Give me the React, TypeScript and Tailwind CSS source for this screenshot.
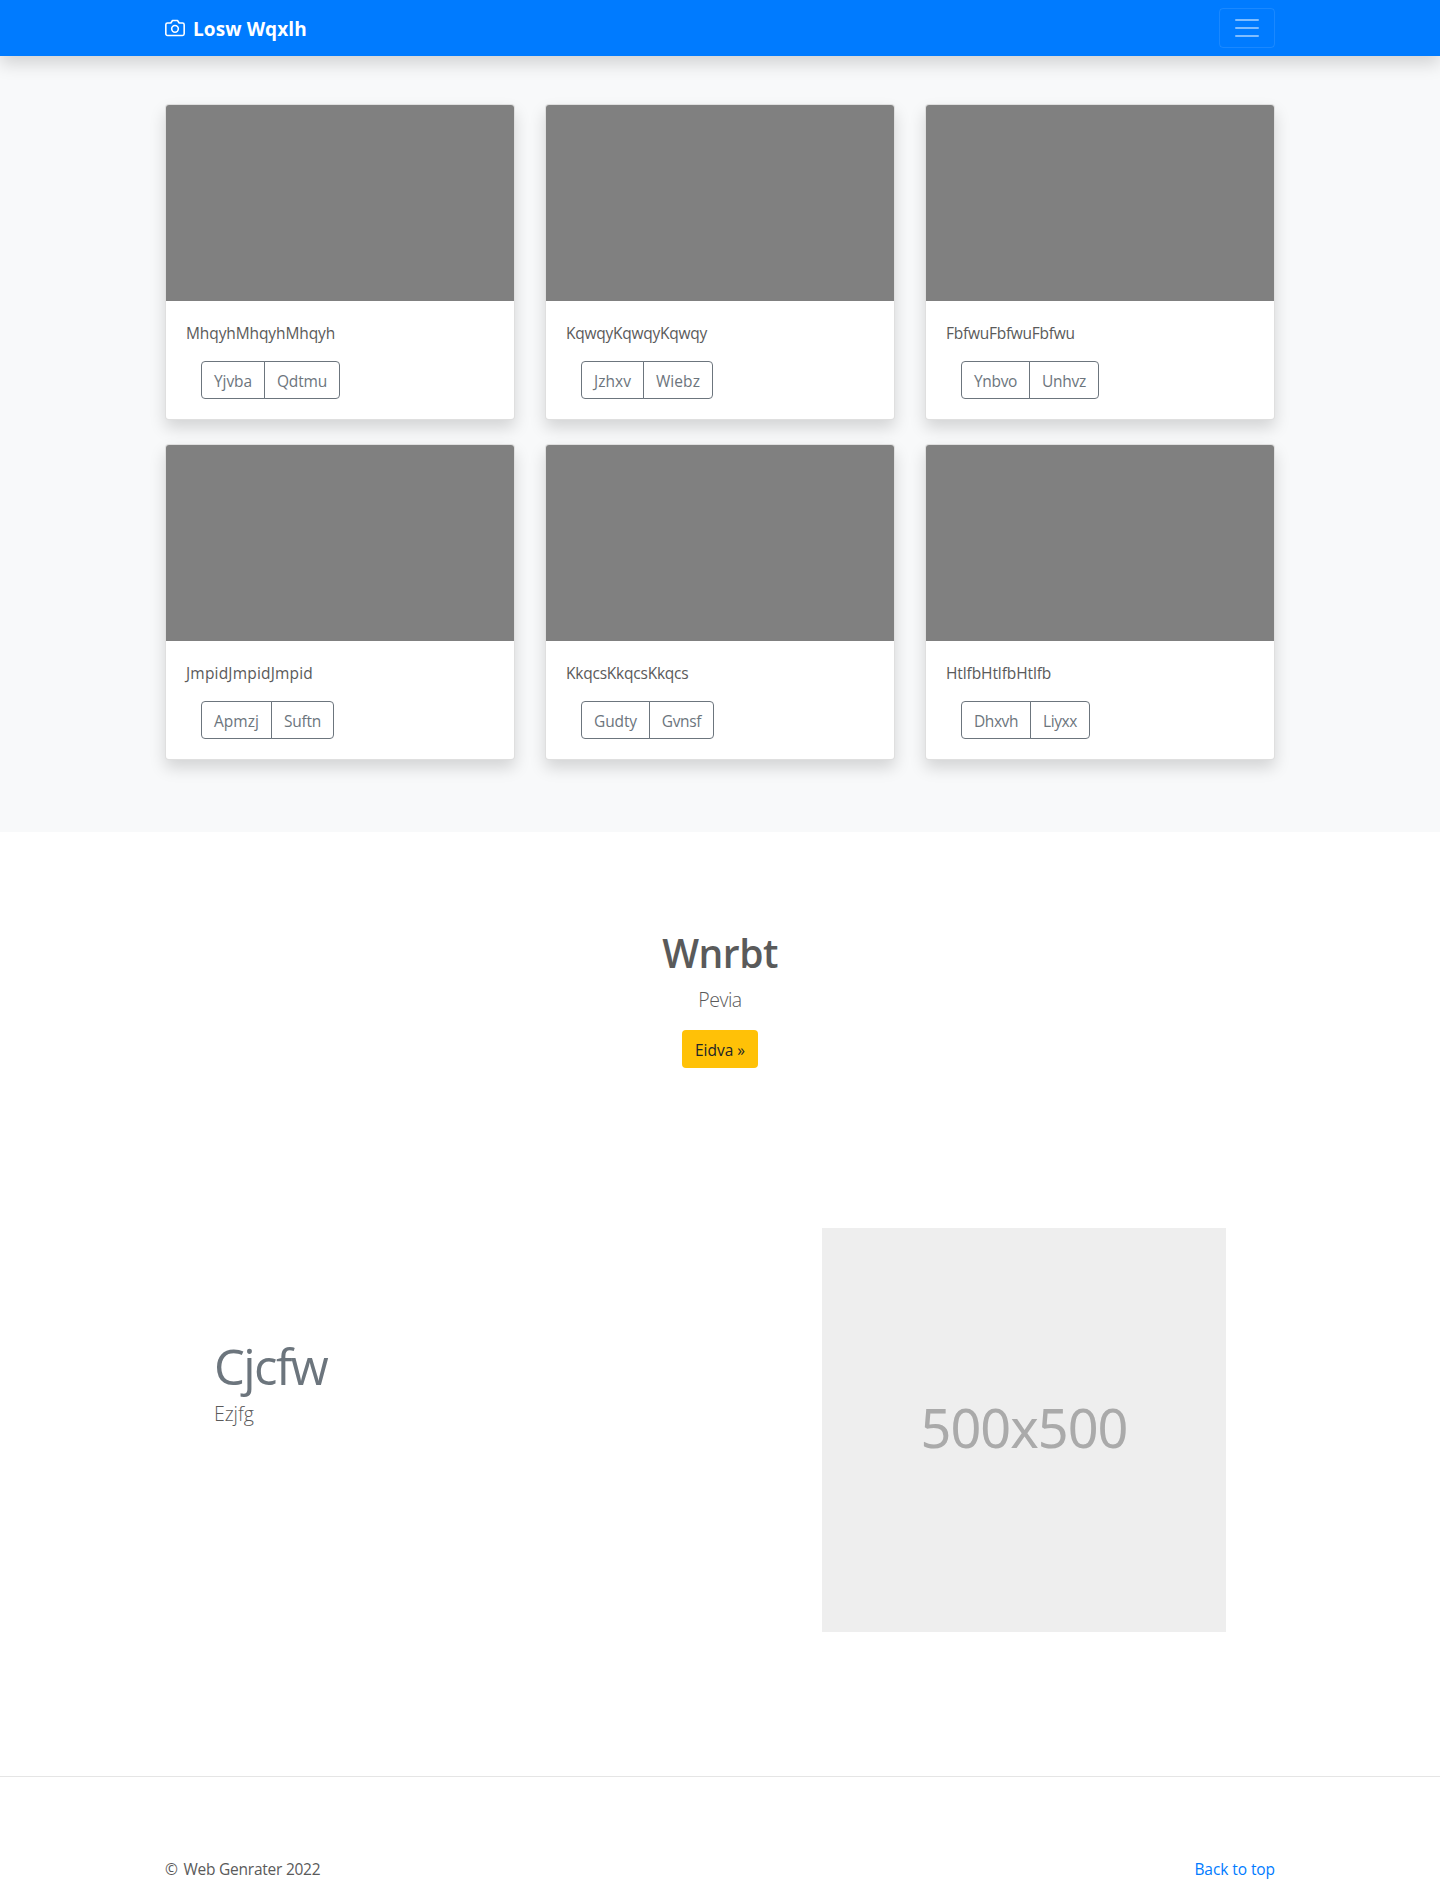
type CardData = {
  title: string;
  titleClass: string;
  left: string;
  leftClass: string;
  right: string;
  rightClass: string;
};

const cards: CardData[] = [
  {
    title: "MhqyhMhqyhMhqyh",
    titleClass: "tracking-[-0.1px]",
    left: "Yjvba",
    leftClass: "w-16 tracking-[-0.08px]",
    right: "Qdtmu",
    rightClass: "w-19 tracking-[-0.18px]",
  },
  {
    title: "KqwqyKqwqyKqwqy",
    titleClass: "tracking-[-0.24px]",
    left: "Jzhxv",
    leftClass: "w-[63px] tracking-[0.04px]",
    right: "Wiebz",
    rightClass: "w-[70px] tracking-[0.06px]",
  },
  {
    title: "FbfwuFbfwuFbfwu",
    titleClass: "tracking-[-0.26px]",
    left: "Ynbvo",
    leftClass: "w-[69px] tracking-[-0.3px]",
    right: "Unhvz",
    rightClass: "w-[70px] tracking-[-0.25px]",
  },
  {
    title: "JmpidJmpidJmpid",
    titleClass: "tracking-[0.19px]",
    left: "Apmzj",
    leftClass: "w-[71px] tracking-[0.04px]",
    right: "Suftn",
    rightClass: "w-[63px] tracking-[-0.26px]",
  },
  {
    title: "KkqcsKkqcsKkqcs",
    titleClass: "tracking-[-0.22px]",
    left: "Gudty",
    leftClass: "w-[69px] tracking-[-0.12px]",
    right: "Gvnsf",
    rightClass: "w-[65px] tracking-[-0.35px]",
  },
  {
    title: "HtlfbHtlfbHtlfb",
    titleClass: "tracking-[-0.1px]",
    left: "Dhxvh",
    leftClass: "w-[70px] tracking-[-0.4px]",
    right: "Liyxx",
    rightClass: "w-[60px] tracking-[-0.4px]",
  },
];

function Navbar() {
  return (
    <header className="relative z-10 h-14 bg-[#007bff] shadow-[0_8px_16px_rgba(0,0,0,0.15)]">
      <div className="mx-auto flex h-full w-[1110px] items-center justify-between">
        <a href="#" className="flex items-center text-white">
          <svg
            className="mr-2 size-5"
            viewBox="0 0 24 24"
            fill="none"
            stroke="currentColor"
            strokeWidth="1.9"
            strokeLinecap="round"
            strokeLinejoin="round"
          >
            <path d="M23 19a2 2 0 0 1-2 2H3a2 2 0 0 1-2-2V8a2 2 0 0 1 2-2h4l2-3h6l2 3h4a2 2 0 0 1 2 2z" />
            <circle cx="12" cy="13" r="4" />
          </svg>
          <strong className="pt-0.5 text-[19px] leading-[30px] font-bold tracking-[0.1px]">
            Losw Wqxlh
          </strong>
        </a>
        <button
          aria-label="Menu"
          className="flex h-10 w-14 items-center justify-center rounded border border-white/10"
        >
          <svg
            className="size-[30px]"
            viewBox="0 0 30 30"
            stroke="rgba(255,255,255,0.5)"
            strokeWidth="2"
            strokeLinecap="round"
            strokeMiterlimit="10"
          >
            <path d="M4 7h22M4 15h22M4 23h22" />
          </svg>
        </button>
      </div>
    </header>
  );
}

function Card({ card }: { card: CardData }) {
  return (
    <article className="h-[316px] rounded border border-black/[0.125] bg-white bg-clip-border shadow-[0_8px_16px_rgba(0,0,0,0.15)]">
      <div className="h-[196px] rounded-t-[3px] bg-[#808080]" />
      <div className="p-5">
        <p className={`mb-4 leading-6 whitespace-nowrap ${card.titleClass}`}>{card.title}</p>
        <div className="ml-[15px] flex text-[#6c757d]">
          <button
            className={`flex h-[38px] items-center justify-center rounded-l border border-[#6c757d] pt-px leading-6 ${card.leftClass}`}
          >
            {card.left}
          </button>
          <button
            className={`-ml-px flex h-[38px] items-center justify-center rounded-r border border-[#6c757d] pt-px leading-6 ${card.rightClass}`}
          >
            {card.right}
          </button>
        </div>
      </div>
    </article>
  );
}

export default function App() {
  return (
    <div className="bg-white font-['Open_Sans',sans-serif] text-[15.5px] leading-6 text-[#5a5a5a]">
      <Navbar />

      <section className="bg-[#f8f9fa] pt-12 pb-[72px]">
        <div className="mx-auto grid w-[1110px] grid-cols-3 gap-x-[30px] gap-y-6">
          {cards.map((card) => (
            <Card key={card.title} card={card} />
          ))}
        </div>
      </section>

      <section className="flex h-[396px] flex-col items-center pt-[97px]">
        <h2 className="mb-2 text-[39px] leading-[48px] font-semibold tracking-[-0.5px]">
          Wnrbt
        </h2>
        <p className="mb-[15px] text-[19.5px] leading-[30px] font-light tracking-[-0.5px]">
          Pevia
        </p>
        <button className="h-[38px] w-[76px] rounded bg-[#ffc107] pt-px text-[#212529]">
          Eidva »
        </button>
      </section>

      <section className="mx-auto flex h-[404px] w-[1110px] items-start justify-between pr-[49px] pl-[49px]">
        <div className="pt-[108px]">
          <h2 className="mb-[3px] text-[49px] leading-[60px] tracking-[-1.6px] text-[#6c757d]">
            Cjcfw
          </h2>
          <p className="text-[19.5px] leading-[30px] font-light tracking-[-0.1px]">Ezjfg</p>
        </div>
        <div className="flex size-[404px] items-center justify-center bg-[#eeeeee] font-['Noto_Sans',sans-serif] text-[54px] leading-[60px] tracking-[-1px] text-[#aaaaaa]">
          <span className="-mt-1.5">500x500</span>
        </div>
      </section>

      <hr className="mt-36 border-t border-black/10" />

      <footer className="mx-auto flex w-[1110px] justify-between pt-20">
        <p className="tracking-[-0.24px]">
          <span className="mr-0.5">©</span> Web Genrater 2022
        </p>
        <a href="#" className="tracking-[-0.08px] text-[#007bff]">
          Back to top
        </a>
      </footer>
    </div>
  );
}
